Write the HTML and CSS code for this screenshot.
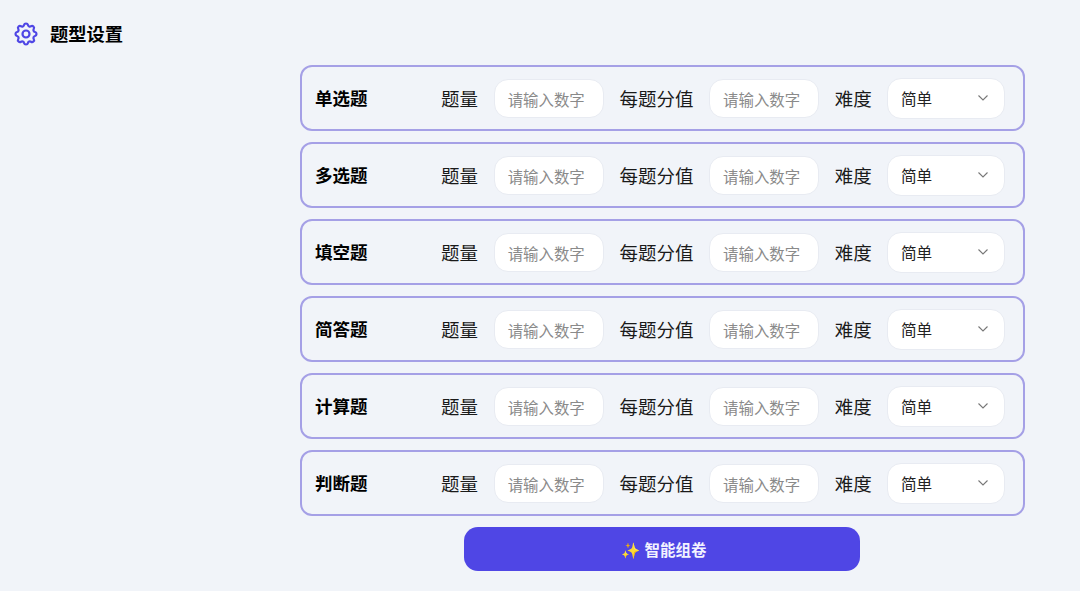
FILE: index.html
```html
<!DOCTYPE html>
<html lang="zh">
<head>
<meta charset="utf-8">
<title>题型设置</title>
<link rel="stylesheet" href="styles.css">
</head>
<body>
<header class="title">
  <svg class="gear" viewBox="0 0 24 24" fill="none" stroke="#4f46e5" stroke-width="1.9" stroke-linecap="round" stroke-linejoin="round"><path d="M10.325 4.317c.426-1.756 2.924-1.756 3.35 0a1.724 1.724 0 0 0 2.573 1.066c1.543-.94 3.31.826 2.37 2.37a1.724 1.724 0 0 0 1.065 2.572c1.756.426 1.756 2.924 0 3.35a1.724 1.724 0 0 0-1.066 2.573c.94 1.543-.826 3.31-2.37 2.37a1.724 1.724 0 0 0-2.572 1.065c-.426 1.756-2.924 1.756-3.35 0a1.724 1.724 0 0 0-2.573-1.066c-1.543.94-3.31-.826-2.37-2.37a1.724 1.724 0 0 0-1.065-2.572c-1.756-.426-1.756-2.924 0-3.35a1.724 1.724 0 0 0 1.066-2.573c-.94-1.543.826-3.31 2.37-2.37.996.608 2.296.07 2.572-1.065z"/><circle cx="12" cy="12" r="3"/></svg>
  <h1>题型设置</h1>
</header>
<main class="panel">
  <div class="row"><strong class="name">单选题</strong><label class="lbl">题量</label><span class="inp">请输入数字</span><label class="lbl">每题分值</label><span class="inp">请输入数字</span><label class="lbl">难度</label><span class="sel">简单<svg class="chev" viewBox="0 0 12 12"><path d="M1.5 3.5 6 8l4.5-4.5"/></svg></span></div>
  <div class="row"><strong class="name">多选题</strong><label class="lbl">题量</label><span class="inp">请输入数字</span><label class="lbl">每题分值</label><span class="inp">请输入数字</span><label class="lbl">难度</label><span class="sel">简单<svg class="chev" viewBox="0 0 12 12"><path d="M1.5 3.5 6 8l4.5-4.5"/></svg></span></div>
  <div class="row"><strong class="name">填空题</strong><label class="lbl">题量</label><span class="inp">请输入数字</span><label class="lbl">每题分值</label><span class="inp">请输入数字</span><label class="lbl">难度</label><span class="sel">简单<svg class="chev" viewBox="0 0 12 12"><path d="M1.5 3.5 6 8l4.5-4.5"/></svg></span></div>
  <div class="row"><strong class="name">简答题</strong><label class="lbl">题量</label><span class="inp">请输入数字</span><label class="lbl">每题分值</label><span class="inp">请输入数字</span><label class="lbl">难度</label><span class="sel">简单<svg class="chev" viewBox="0 0 12 12"><path d="M1.5 3.5 6 8l4.5-4.5"/></svg></span></div>
  <div class="row"><strong class="name">计算题</strong><label class="lbl">题量</label><span class="inp">请输入数字</span><label class="lbl">每题分值</label><span class="inp">请输入数字</span><label class="lbl">难度</label><span class="sel">简单<svg class="chev" viewBox="0 0 12 12"><path d="M1.5 3.5 6 8l4.5-4.5"/></svg></span></div>
  <div class="row"><strong class="name">判断题</strong><label class="lbl">题量</label><span class="inp">请输入数字</span><label class="lbl">每题分值</label><span class="inp">请输入数字</span><label class="lbl">难度</label><span class="sel">简单<svg class="chev" viewBox="0 0 12 12"><path d="M1.5 3.5 6 8l4.5-4.5"/></svg></span></div>
  <button class="go"><span class="spark">✨</span> 智能组卷</button>
</main>
</body>
</html>
```
FILE: styles.css
```css
* { box-sizing: border-box; }
html, body { margin: 0; height: 591px; overflow: hidden; }
body {
  background: #f1f4f9;
  font-family: Inter, "Noto Sans CJK SC", sans-serif;
  color: #111;
  padding: 21px 0 0 12px;
}
.title { display: flex; align-items: center; gap: 10px; height: 26px; }
.gear { width: 28px; height: 28px; flex: none; }
.title h1 { margin: 0 0 1px; font-size: 18.3px; font-weight: 700; line-height: 26px; color: #000; }
.panel {
  width: 725px;
  margin: 18px 0 0 288px;
  display: flex;
  flex-direction: column;
}
.row {
  height: 66px;
  margin-bottom: 11px;
  border: 2px solid #a5a0e6;
  border-radius: 12px;
  display: flex;
  align-items: center;
  padding: 0 18px 0 13px;
}
.name { width: 126px; flex: none; font-size: 17.5px; font-weight: 700; color: #000; position: relative; top: -0.5px; }
.lbl { flex: none; font-size: 18.5px; margin-right: 15.7px; color: #1a1a1a; }
.inp {
  flex: none;
  width: 110px; height: 39px;
  background: #fff;
  border: 1px solid #e8ebf2;
  border-radius: 14px;
  margin-right: 15.7px;
  padding: 2px 0 0 13px;
  display: flex; align-items: center;
  font-size: 15.4px; color: #8a8a8a;
  white-space: nowrap;
}
.sel {
  flex: none;
  width: 118px; height: 41px;
  background: #fff;
  border: 1px solid #e8ebf2;
  border-radius: 14px;
  padding: 0 15px 0 12.5px;
  display: flex; align-items: center; justify-content: space-between;
  font-size: 15.6px; color: #222;
}
.chev { width: 12px; height: 12px; fill: none; stroke: #777; stroke-width: 1.1; }
.go {
  width: 396px; height: 44px;
  margin: 0 0 0 164px;
  padding: 0 0 0 3px;
  border: none;
  border-radius: 14px;
  background: #4f46e5;
  color: #f2f2ff;
  font: 600 15.5px Inter, "Noto Sans CJK SC", sans-serif;
}
.spark { color: #fbbf24; margin-right: 1px; }
```
